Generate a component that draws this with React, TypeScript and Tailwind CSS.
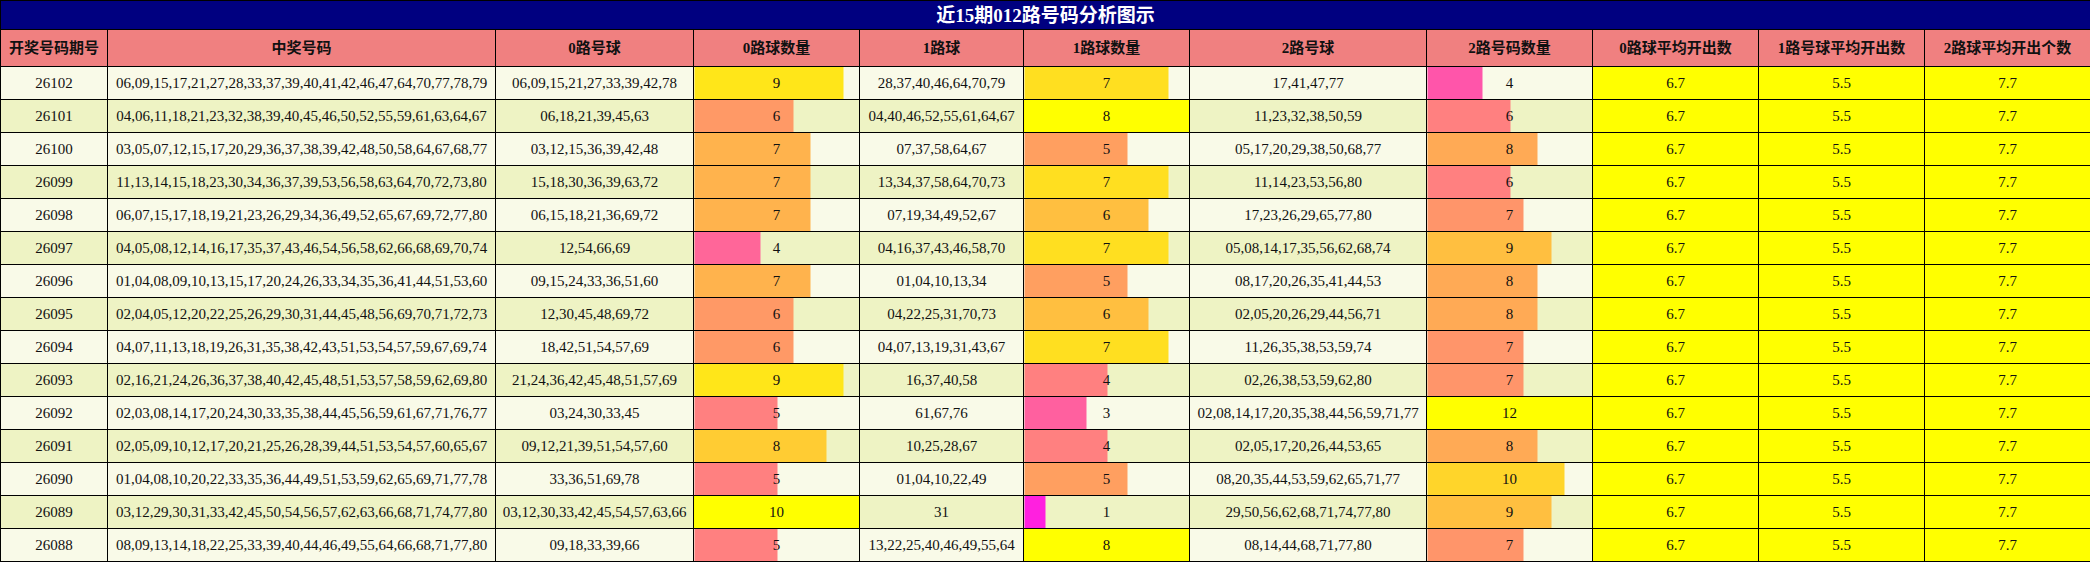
const rows: [string, string, string, number, string, number, string, number][] = [
  ['26102', '06,09,15,17,21,27,28,33,37,39,40,41,42,46,47,64,70,77,78,79', '06,09,15,21,27,33,39,42,78', 9, '28,37,40,46,64,70,79', 7, '17,41,47,77', 4],
  ['26101', '04,06,11,18,21,23,32,38,39,40,45,46,50,52,55,59,61,63,64,67', '06,18,21,39,45,63', 6, '04,40,46,52,55,61,64,67', 8, '11,23,32,38,50,59', 6],
  ['26100', '03,05,07,12,15,17,20,29,36,37,38,39,42,48,50,58,64,67,68,77', '03,12,15,36,39,42,48', 7, '07,37,58,64,67', 5, '05,17,20,29,38,50,68,77', 8],
  ['26099', '11,13,14,15,18,23,30,34,36,37,39,53,56,58,63,64,70,72,73,80', '15,18,30,36,39,63,72', 7, '13,34,37,58,64,70,73', 7, '11,14,23,53,56,80', 6],
  ['26098', '06,07,15,17,18,19,21,23,26,29,34,36,49,52,65,67,69,72,77,80', '06,15,18,21,36,69,72', 7, '07,19,34,49,52,67', 6, '17,23,26,29,65,77,80', 7],
  ['26097', '04,05,08,12,14,16,17,35,37,43,46,54,56,58,62,66,68,69,70,74', '12,54,66,69', 4, '04,16,37,43,46,58,70', 7, '05,08,14,17,35,56,62,68,74', 9],
  ['26096', '01,04,08,09,10,13,15,17,20,24,26,33,34,35,36,41,44,51,53,60', '09,15,24,33,36,51,60', 7, '01,04,10,13,34', 5, '08,17,20,26,35,41,44,53', 8],
  ['26095', '02,04,05,12,20,22,25,26,29,30,31,44,45,48,56,69,70,71,72,73', '12,30,45,48,69,72', 6, '04,22,25,31,70,73', 6, '02,05,20,26,29,44,56,71', 8],
  ['26094', '04,07,11,13,18,19,26,31,35,38,42,43,51,53,54,57,59,67,69,74', '18,42,51,54,57,69', 6, '04,07,13,19,31,43,67', 7, '11,26,35,38,53,59,74', 7],
  ['26093', '02,16,21,24,26,36,37,38,40,42,45,48,51,53,57,58,59,62,69,80', '21,24,36,42,45,48,51,57,69', 9, '16,37,40,58', 4, '02,26,38,53,59,62,80', 7],
  ['26092', '02,03,08,14,17,20,24,30,33,35,38,44,45,56,59,61,67,71,76,77', '03,24,30,33,45', 5, '61,67,76', 3, '02,08,14,17,20,35,38,44,56,59,71,77', 12],
  ['26091', '02,05,09,10,12,17,20,21,25,26,28,39,44,51,53,54,57,60,65,67', '09,12,21,39,51,54,57,60', 8, '10,25,28,67', 4, '02,05,17,20,26,44,53,65', 8],
  ['26090', '01,04,08,10,20,22,33,35,36,44,49,51,53,59,62,65,69,71,77,78', '33,36,51,69,78', 5, '01,04,10,22,49', 5, '08,20,35,44,53,59,62,65,71,77', 10],
  ['26089', '03,12,29,30,31,33,42,45,50,54,56,57,62,63,66,68,71,74,77,80', '03,12,30,33,42,45,54,57,63,66', 10, '31', 1, '29,50,56,62,68,71,74,77,80', 9],
  ['26088', '08,09,13,14,18,22,25,33,39,40,44,46,49,55,64,66,68,71,77,80', '09,18,33,39,66', 5, '13,22,25,40,46,49,55,64', 8, '08,14,44,68,71,77,80', 7],
];

const headers = ['开奖号码期号', '中奖号码', '0路号球', '0路球数量', '1路球', '1路球数量', '2路号球', '2路号码数量', '0路球平均开出数', '1路号球平均开出数', '2路球平均开出个数'];

const max0 = Math.max(...rows.map(r => r[3]));
const max1 = Math.max(...rows.map(r => r[5]));
const max2 = Math.max(...rows.map(r => r[7]));

// spring colormap: magenta -> yellow
function spring(f: number) {
  return `rgb(255, ${Math.round(255 * f)}, ${Math.round(255 * (1 - f))})`;
}

function BarCell({ value, max }: { value: number; max: number }) {
  const f = value / max;
  const pct = (f * 100).toFixed(1);
  return (
    <td
      className="border border-black text-center"
      style={{ background: `linear-gradient(90deg, ${spring(f)} ${pct}%, transparent ${pct}%)` }}
    >
      {value}
    </td>
  );
}

export default function App() {
  return (
    <div className="w-[2090px] h-[562px] overflow-hidden bg-white">
      <table
        className="w-[2090px] table-fixed border-collapse text-[15px] text-[#111]"
        style={{ fontFamily: "'Liberation Serif', 'Noto Sans CJK SC', serif" }}
      >
        <colgroup>
          <col className="w-[107px]" />
          <col className="w-[388px]" />
          <col className="w-[198px]" />
          <col className="w-[166px]" />
          <col className="w-[164px]" />
          <col className="w-[166px]" />
          <col className="w-[237px]" />
          <col className="w-[166px]" />
          <col className="w-[166px]" />
          <col className="w-[166px]" />
          <col className="w-[166px]" />
        </colgroup>
        <thead>
          <tr className="h-[29px] bg-[#000080]">
            <th colSpan={11} className="border border-black text-white text-[19px] font-bold leading-none pt-px">
              近15期012路号码分析图示
            </th>
          </tr>
          <tr className="h-[37px] bg-[#f08080]">
            {headers.map(h => (
              <th key={h} className="border border-black font-bold text-[15px] text-[#111]">{h}</th>
            ))}
          </tr>
        </thead>
        <tbody>
          {rows.map((r, i) => (
            <tr key={r[0]} className={i % 2 === 0 ? 'h-[33px] bg-[#f9fae8]' : 'h-[33px] bg-[#eef3c4]'}>
              <td className="border border-black text-center">{r[0]}</td>
              <td className="border border-black text-center">{r[1]}</td>
              <td className="border border-black text-center">{r[2]}</td>
              <BarCell value={r[3]} max={max0} />
              <td className="border border-black text-center">{r[4]}</td>
              <BarCell value={r[5]} max={max1} />
              <td className="border border-black text-center">{r[6]}</td>
              <BarCell value={r[7]} max={max2} />
              <td className="border border-black text-center bg-[#ffff00]">6.7</td>
              <td className="border border-black text-center bg-[#ffff00]">5.5</td>
              <td className="border border-black text-center bg-[#ffff00]">7.7</td>
            </tr>
          ))}
        </tbody>
      </table>
    </div>
  );
}
